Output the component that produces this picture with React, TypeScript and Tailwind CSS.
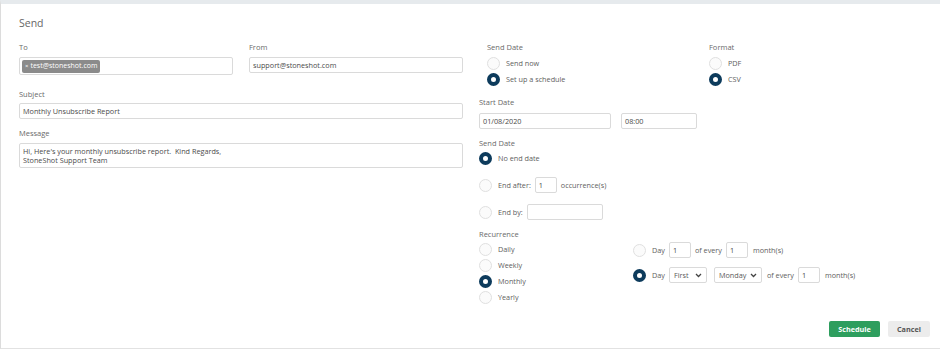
import React from 'react';

const font = { fontFamily: '"Open Sans", "Noto Sans", sans-serif' };

const Radio: React.FC<{ checked?: boolean }> = ({ checked = false }) =>
  checked ? (
    <span className="inline-block w-[13px] h-[13px] rounded-full border-[4px] border-[#0d3b5c] bg-white shrink-0" />
  ) : (
    <span className="inline-block w-[13px] h-[13px] rounded-full border border-[#e0e0e0] bg-[#fbfbfb] shrink-0" />
  );

const Label: React.FC<{ children: React.ReactNode; className?: string }> = ({ children, className = '' }) => (
  <div className={`h-[12px] flex items-center text-[7.5px] text-[#6a6a6a] ${className}`}>{children}</div>
);

const Box: React.FC<{ value?: string; className?: string }> = ({ value = '', className = '' }) => (
  <div className={`h-[16px] border border-[#dadada] rounded-[2px] bg-white flex items-center px-[3px] text-[7.25px] text-[#4a4a4a] ${className}`}>
    {value}
  </div>
);

const Select: React.FC<{ value: string; className?: string }> = ({ value, className = '' }) => (
  <div className={`h-[16px] border border-[#dadada] rounded-[2px] bg-white flex items-center justify-between px-[4px] text-[7.25px] text-[#5a5a5a] ${className}`}>
    <span>{value}</span>
    <svg width="7" height="5" viewBox="0 0 7 5">
      <path d="M1 1l2.5 2.5L6 1" stroke="#444" strokeWidth="1.3" fill="none" />
    </svg>
  </div>
);

const RadioRow: React.FC<{ checked?: boolean; label: string; className?: string }> = ({ checked, label, className = '' }) => (
  <div className={`h-[16px] flex items-center gap-[6px] text-[7.25px] text-[#606060] ${className}`}>
    <Radio checked={checked} />
    <span>{label}</span>
  </div>
);

export default function App() {
  return (
    <div style={font} className="w-[940px] h-[349px] bg-white border-t-[4px] border-t-[#e6eaed] border-l border-l-[#dcdcdc] border-b border-b-[#e2e2e2] flex flex-col">
      <div className="h-[38px] flex items-center pl-[18px] pt-[1px] text-[10.5px] text-[#666]">Send</div>

      <div className="flex">
        {/* left column */}
        <div className="ml-[18px] w-[444px]">
          <div className="flex gap-[16px]">
            <div className="w-[214px]">
              <Label>To</Label>
              <div className="mt-[3px] h-[18px] border border-[#dadada] rounded-[2px] flex items-center px-[2px]">
                <span className="h-[13px] px-[3px] rounded-[2px] bg-[#8b8b8b] text-white text-[7px] flex items-center gap-[2px]">
                  <span className="text-[6px]">×</span>test@stoneshot.com
                </span>
              </div>
            </div>
            <div className="w-[214px]">
              <Label>From</Label>
              <Box value="support@stoneshot.com" className="mt-[3px]" />
            </div>
          </div>
          <Label className="mt-[14px]">Subject</Label>
          <Box value="Monthly Unsubscribe Report" className="mt-[2px]" />
          <Label className="mt-[9px]">Message</Label>
          <div className="mt-[3px] h-[25px] border border-[#dadada] rounded-[2px] px-[3px] pt-[3px] text-[7.25px] leading-[9px] text-[#4a4a4a]">
            <div>Hi, Here's your monthly unsubscribe report.&nbsp; Kind Regards,</div>
            <div>StoneShot Support Team</div>
          </div>
        </div>

        {/* right column */}
        <div className="ml-[16px] flex-1 pr-[10px] flex flex-col">
          <div className="flex pl-[8px]">
            <div className="w-[222px]">
              <Label>Send Date</Label>
              <RadioRow label="Send now" className="mt-[1px]" />
              <RadioRow checked label="Set up a schedule" />
            </div>
            <div>
              <Label>Format</Label>
              <RadioRow label="PDF" className="mt-[1px]" />
              <RadioRow checked label="CSV" />
            </div>
          </div>

          <Label className="mt-[10px]">Start Date</Label>
          <div className="mt-[4px] flex gap-[10px]">
            <Box value="01/08/2020" className="w-[132px]" />
            <Box value="08:00" className="w-[76px]" />
          </div>

          <Label className="mt-[9px]">Send Date</Label>
          <RadioRow checked label="No end date" />
          <div className="mt-[11px] h-[16px] flex items-center text-[7.25px] text-[#606060]">
            <Radio />
            <span className="ml-[6px]">End after:</span>
            <Box value="1" className="ml-[4px] w-[22px]" />
            <span className="ml-[4px]">occurrence(s)</span>
          </div>
          <div className="mt-[11px] h-[16px] flex items-center text-[7.25px] text-[#606060]">
            <Radio />
            <span className="ml-[6px]">End by:</span>
            <Box className="ml-[4px] w-[76px]" />
          </div>

          <Label className="mt-[9px]">Recurrence</Label>
          <div className="flex">
            <div className="w-[154px]">
              <RadioRow label="Daily" />
              <RadioRow label="Weekly" />
              <RadioRow checked label="Monthly" />
              <RadioRow label="Yearly" />
            </div>
            <div className="text-[7.25px] text-[#606060]">
              <div className="mt-[1px] h-[16px] flex items-center">
                <Radio />
                <span className="ml-[6px]">Day</span>
                <Box value="1" className="ml-[4px] w-[22px]" />
                <span className="ml-[4px]">of every</span>
                <Box value="1" className="ml-[4px] w-[22px]" />
                <span className="ml-[5px]">month(s)</span>
              </div>
              <div className="mt-[9px] h-[16px] flex items-center">
                <Radio checked />
                <span className="ml-[6px]">Day</span>
                <Select value="First" className="ml-[4px] w-[38px]" />
                <Select value="Monday" className="ml-[7px] w-[48px]" />
                <span className="ml-[5px]">of every</span>
                <Box value="1" className="ml-[4px] w-[22px]" />
                <span className="ml-[5px]">month(s)</span>
              </div>
            </div>
          </div>

          <div className="mt-[16px] flex justify-end gap-[8px]">
            <button className="h-[16px] w-[51px] rounded-[2px] bg-[#2e9e5e] text-white text-[7.25px] font-bold">Schedule</button>
            <button className="h-[16px] w-[42px] rounded-[2px] bg-[#ececec] text-[#555] text-[7.25px] font-bold">Cancel</button>
          </div>
        </div>
      </div>
    </div>
  );
}
